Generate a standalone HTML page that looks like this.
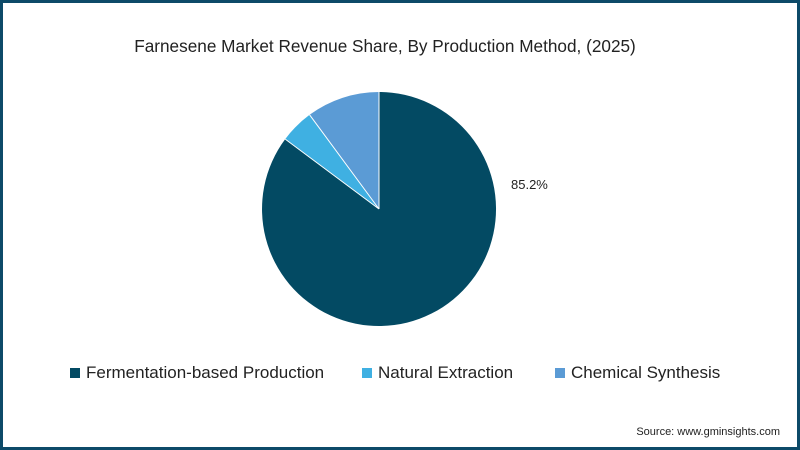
<!DOCTYPE html>
<html><head><style>
html,body{margin:0;padding:0;}
body{width:800px;height:450px;overflow:hidden;background:#fff;font-family:"Liberation Sans",sans-serif;}
.frame{position:absolute;left:0;top:0;width:794px;height:444px;border:3px solid #0d4a68;}
.t{position:absolute;left:-15px;width:800px;top:36px;text-align:center;font-size:17.2px;color:#222;}
.lbl{position:absolute;left:511px;top:177px;font-size:13px;color:#222;}
.lg{position:absolute;top:363px;font-size:17px;color:#222;}
.sq{display:inline-block;width:10px;height:10px;margin-right:6px;vertical-align:0px;}
.src{position:absolute;right:20px;top:426px;font-size:11px;color:#222;}
</style></head><body>
<div class="frame"></div>
<div class="t">Farnesene Market Revenue Share, By Production Method, (2025)</div>
<svg width="800" height="450" style="position:absolute;left:0;top:0">
<path d="M379 209 L379 92 A117 117 0 1 1 285.2 139.1 Z" fill="#034a63"/>
<path d="M379 209 L285.2 139.1 A117 117 0 0 1 309.6 114.8 Z" fill="#3fb0e2"/>
<path d="M379 209 L309.6 114.8 A117 117 0 0 1 379 92 Z" fill="#5b9bd5"/>
<path d="M379 209 L379 92 M379 209 L285.2 139.1 M379 209 L309.6 114.8" stroke="#fff" stroke-width="1"/>
</svg>
<div class="lbl">85.2%</div>
<div class="lg" style="left:70px"><span class="sq" style="background:#034a63"></span>Fermentation-based Production</div>
<div class="lg" style="left:362px"><span class="sq" style="background:#3fb0e2"></span>Natural Extraction</div>
<div class="lg" style="left:555px"><span class="sq" style="background:#5b9bd5"></span>Chemical Synthesis</div>
<div class="src">Source: www.gminsights.com</div>
</body></html>
